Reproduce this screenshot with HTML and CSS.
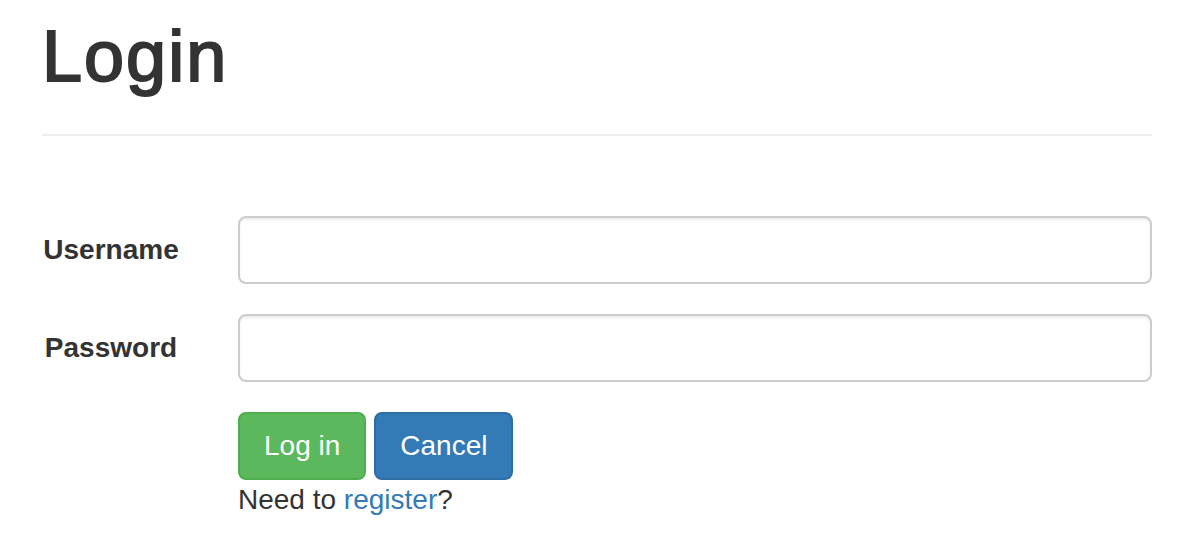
FILE: index.html
```html
<!DOCTYPE html>
<html>
<head>
<meta charset="utf-8">
<link rel="stylesheet" href="styles.css">
</head>
<body>
<div class="container">
  <div class="page-header">
    <h1>Login</h1>
  </div>
  <form class="login-form">
    <div class="form-row">
      <label class="form-label" for="username">Username</label>
      <input class="form-input" id="username" type="text">
    </div>
    <div class="form-row">
      <label class="form-label" for="password">Password</label>
      <input class="form-input" id="password" type="password">
    </div>
    <div class="form-row">
      <span></span>
      <div class="actions">
        <div class="buttons">
          <button type="button" class="btn btn-success">Log in</button>
          <button type="button" class="btn btn-primary">Cancel</button>
        </div>
        <p class="register">Need to <a href="#">register</a>?</p>
      </div>
    </div>
  </form>
</div>
</body>
</html>
```

FILE: styles.css
```css
html, body {
  margin: 0;
  padding: 0;
  background: #fff;
}
body {
  font-family: "Liberation Sans", Arial, sans-serif;
  font-size: 28px;
  line-height: 40px;
  color: #333;
}
.container {
  padding: 0 48px 0 42px;
}
.page-header {
  border-bottom: 2px solid #eee;
  padding-bottom: 18px;
}
.page-header h1 {
  margin: 17px 0 20px 0;
  font-size: 72px;
  line-height: 1.1;
  font-weight: 500;
  letter-spacing: 2px;
  -webkit-text-stroke: 2px #333;
}
.login-form {
  margin-top: 80px;
}
.form-row {
  display: grid;
  grid-template-columns: 138px 1fr;
  column-gap: 58px;
  align-items: center;
  margin-bottom: 30px;
}
.form-row:last-child {
  margin-bottom: 0;
  align-items: start;
}
.form-label {
  font-weight: bold;
  text-align: center;
}
.form-input {
  box-sizing: border-box;
  height: 68px;
  width: 100%;
  border: 2px solid #ccc;
  border-radius: 8px;
  box-shadow: inset 0 2px 2px rgba(0,0,0,0.075);
  font: inherit;
  padding: 12px 24px;
}
.buttons {
  display: flex;
  gap: 8px;
}
.btn {
  box-sizing: border-box;
  height: 68px;
  padding: 12px 24px;
  border: 2px solid transparent;
  border-radius: 8px;
  font: inherit;
  color: #fff;
}
.btn-success {
  background: #5cb85c;
  border-color: #4cae4c;
}
.btn-primary {
  background: #337ab7;
  border-color: #2e6da4;
}
.register {
  margin: 0;
}
.register a {
  color: #337ab7;
  text-decoration: none;
}
```
